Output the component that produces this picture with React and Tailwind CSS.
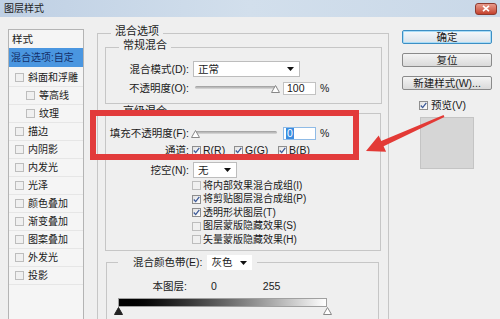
import React from 'react'

function Box({ on, light }) {
  return (
    <span
      className={`w-[9px] h-[9px] shrink-0 flex items-center justify-center border ${
        light ? 'border-[#bdbdbd] bg-[#f0f0f0]' : 'border-[#8e8e8e] bg-gradient-to-br from-[#e2e2e2] to-white'
      }`}
    >
      {on && (
        <svg width="7" height="7" viewBox="0 0 7 7">
          <path d="M0.8 3.5 L2.7 5.6 L6.3 0.9" fill="none" stroke="#3b5998" strokeWidth="1.3" />
        </svg>
      )}
    </span>
  )
}

function Arrow() {
  return (
    <svg width="7" height="4" viewBox="0 0 7 4">
      <path d="M0 0 H7 L3.5 4 Z" fill="#111" />
    </svg>
  )
}

function Thumb({ dark }) {
  return (
    <svg width="9" height="8" viewBox="0 0 9 8">
      <path d="M4.5 0.5 L8.5 7.5 L0.5 7.5 Z" fill={dark ? '#222' : '#fff'} stroke={dark ? '#222' : '#888'} />
    </svg>
  )
}

const sideItems = [
  { t: '斜面和浮雕' },
  { t: '等高线', sub: true },
  { t: '纹理', sub: true },
  { t: '描边' },
  { t: '内阴影' },
  { t: '内发光' },
  { t: '光泽' },
  { t: '颜色叠加' },
  { t: '渐变叠加' },
  { t: '图案叠加' },
  { t: '外发光' },
  { t: '投影' },
]

const options = [
  { t: '将内部效果混合成组(I)', on: false },
  { t: '将剪贴图层混合成组(P)', on: true },
  { t: '透明形状图层(T)', on: true },
  { t: '图层蒙版隐藏效果(S)', on: false },
  { t: '矢量蒙版隐藏效果(H)', on: false },
]

export default function App() {
  return (
    <div className="relative w-[500px] h-[319px] overflow-hidden bg-[#efefef] text-[#1a1a1a] font-['Liberation_Sans','Noto_Sans_CJK_SC',sans-serif] text-[10.5px] leading-none">
      {/* title bar */}
      <div className="h-[17px] flex items-center justify-between pl-[4px] pr-[3px] bg-gradient-to-r from-[#bfd0e4] via-[#d2dfec] to-[#c9d8e8]">
        <span className="text-[10px] text-[#222]">图层样式</span>
        <div className="w-[22px] h-[12px] rounded-[3px] border border-[#8d3b30] bg-gradient-to-b from-[#e79a8c] to-[#c4402c] flex items-center justify-center">
          <svg width="8" height="7" viewBox="0 0 8 7">
            <path d="M1 0.8 L7 6.2 M7 0.8 L1 6.2" stroke="#fff" strokeWidth="1.6" />
          </svg>
        </div>
      </div>

      <div className="flex">
        {/* style list */}
        <div className="pl-[8px] pt-[12px]">
          <div className="w-[76px] h-[300px] border border-[#b4b4b4] bg-[#f5f5f5]">
            <div className="h-[17px] flex items-center pl-[3px] pt-[1px]">样式</div>
            <div className="h-[22px] pt-[1px]">
              <div className="h-[19px] bg-[#4a96e0] text-[#14306a] flex items-center pl-[2px] text-[10px]">混合选项:自定</div>
            </div>
            {sideItems.map((it) => (
              <div
                key={it.t}
                className={`h-[18px] flex items-center gap-[3px] border-b border-[#e6e6e6] text-[10px] ${it.sub ? 'pl-[17px]' : 'pl-[6px]'}`}
              >
                <Box light />
                <span className="ml-[1px]">{it.t}</span>
              </div>
            ))}
          </div>
        </div>

        {/* blending options */}
        <fieldset className="ml-[13px] mt-[9px] w-[292px] h-[320px] border border-[#c6c6c6] shrink-0">
          <legend className="ml-[13px] px-[4px] h-[14px] text-[11px]">混合选项</legend>

          <fieldset className="ml-[7px] w-[277px] border border-[#c6c6c6] pb-[8px]">
            <legend className="ml-[13px] px-[4px] h-[14px] text-[11px]">常规混合</legend>
            <div className="mt-[7px] h-[16px] flex items-center">
              <span className="w-[83px] text-right">混合模式(D):</span>
              <div className="ml-[4px] w-[107px] h-[16px] bg-white border border-[#bdbdbd] flex items-center justify-between pl-[4px] pr-[5px]">
                <span>正常</span>
                <Arrow />
              </div>
            </div>
            <div className="mt-[4px] h-[14px] flex items-center">
              <span className="w-[83px] text-right">不透明度(O):</span>
              <div className="ml-[2px] relative w-[90px] h-[14px]">
                <div className="absolute left-[4px] right-[4px] top-[5px] h-[3px] rounded-full bg-gradient-to-b from-[#9c9c9c] to-[#dcdcdc]" />
                <div className="absolute left-[80px] top-[4px] flex"><Thumb /></div>
              </div>
              <div className="ml-[2px] w-[33px] h-[13px] bg-white border border-[#c2c2c2] flex items-center pl-[3px]">100</div>
              <span className="ml-[4px]">%</span>
            </div>
          </fieldset>

          <fieldset className="mt-[2px] ml-[7px] w-[276px] border border-[#c6c6c6] pb-[3px]">
            <legend className="ml-[13px] px-[4px] h-[14px] text-[11px]">高级混合</legend>
            <div className="mt-[7px] h-[13px] flex items-center">
              <span className="w-[83px] text-right">填充不透明度(F):</span>
              <div className="ml-[2px] relative w-[90px] h-[13px]">
                <div className="absolute left-[4px] right-[4px] top-[4px] h-[3px] rounded-full bg-gradient-to-b from-[#9c9c9c] to-[#dcdcdc]" />
                <div className="absolute left-0 top-[3px] flex"><Thumb /></div>
              </div>
              <div className="ml-[2px] w-[33px] h-[13px] bg-white border border-[#8fbbe6] flex items-center pl-[2px]">
                <span className="h-[11px] px-[1px] bg-[#3b8de0] text-white flex items-center">0</span>
              </div>
              <span className="ml-[4px]">%</span>
            </div>
            <div className="mt-[4px] h-[12px] flex items-center">
              <span className="w-[83px] text-right">通道:</span>
              <div className="ml-[3px] w-[42px] flex items-center gap-[2px]"><Box on /><span>R(R)</span></div>
              <div className="w-[44px] flex items-center gap-[2px]"><Box on /><span>G(G)</span></div>
              <div className="flex items-center gap-[2px]"><Box on /><span>B(B)</span></div>
            </div>
            <div className="mt-[6px] h-[16px] flex items-center">
              <span className="w-[83px] text-right">挖空(N):</span>
              <div className="ml-[4px] w-[44px] h-[16px] bg-white border border-[#bdbdbd] flex items-center justify-between pl-[4px] pr-[5px]">
                <span>无</span>
                <Arrow />
              </div>
            </div>
            <div className="mt-[1px] pl-[86px] text-[10px]">
              {options.map((o) => (
                <div key={o.t} className="h-[13.5px] flex items-center gap-[2px]">
                  <Box on={o.on} light={!o.on} />
                  <span>{o.t}</span>
                </div>
              ))}
            </div>
          </fieldset>

          <fieldset className="mt-[5px] ml-[8px] w-[273px] h-[70px] border border-[#c6c6c6]">
            <legend className="ml-[11px] pl-[15px] pr-[5px] h-[14px]">
              <div className="flex items-center h-[14px]">
                <span>混合颜色带(E):</span>
                <div className="ml-[5px] w-[45px] h-[15px] bg-white flex items-center justify-between pl-[4px] pr-[5px]">
                  <span>灰色</span>
                  <Arrow />
                </div>
              </div>
            </legend>
            <div className="mt-[11px] h-[12px] flex items-center">
              <span className="w-[80px] text-right">本图层:</span>
              <span className="ml-[24px]">0</span>
              <span className="ml-[46px]">255</span>
            </div>
            <div className="mt-[5px] ml-[11px] w-[209px] h-[9px] border border-[#a0a0a0] bg-gradient-to-r from-black to-white" />
            <div className="ml-[7px] w-[218px] flex justify-between">
              <Thumb dark />
              <Thumb />
            </div>
          </fieldset>
        </fieldset>

        {/* buttons */}
        <div className="ml-[13px] mt-[13px] w-[90px] flex flex-col">
          <div className="h-[14px] rounded-[2px] border border-[#3c8fc4] bg-gradient-to-b from-[#f4f8fb] to-[#dbe3ea] shadow-[inset_0_0_0_1px_#a8dcf7] flex items-center justify-center">确定</div>
          <div className="mt-[9px] h-[14px] rounded-[2px] border border-[#8a8a8a] bg-gradient-to-b from-[#f4f4f4] to-[#dadada] flex items-center justify-center">复位</div>
          <div className="mt-[9px] h-[14px] rounded-[2px] border border-[#8a8a8a] bg-gradient-to-b from-[#f4f4f4] to-[#dadada] flex items-center justify-center">新建样式(W)...</div>
          <div className="mt-[10px] ml-[17px] h-[10px] flex items-center gap-[3px]">
            <Box on />
            <span>预览(V)</span>
          </div>
          <div className="mt-[7px] ml-[18px] w-[54px] h-[52px] bg-[#d6d6d6] border border-[#c4c4c4]" />
        </div>
      </div>

      {/* red annotation */}
      <div className="absolute left-[90px] top-[110px] w-[269px] h-[50px] border-[6px] border-[#e23b3b]" />
      <svg className="absolute left-0 top-0 pointer-events-none" width="500" height="319">
        <polygon
          points="366,151 386.1,151.8 383.6,146.3 444.4,116.9 443.6,115.1 381.2,140.9 378.7,135.4"
          fill="#e33a36"
        />
      </svg>
    </div>
  )
}
